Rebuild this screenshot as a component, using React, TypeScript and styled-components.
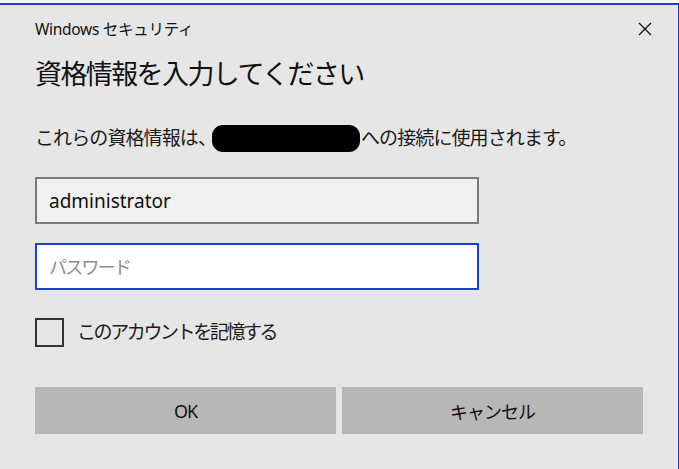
import React, {useState} from 'react';
import styled, {createGlobalStyle} from 'styled-components';

const GlobalStyle = createGlobalStyle`
  html, body {
    margin: 0;
    padding: 0;
    background: #ffffff;
  }
  body {
    font-family: "Noto Sans", "Noto Sans CJK JP", sans-serif;
    color: #1b1b1b;
  }
`;

const Screen = styled.div`
  width: 679px;
  height: 469px;
  overflow: hidden;
  display: flex;
  flex-direction: column;
  background: #f4f4f4;
`;

const BehindStrip = styled.div`
  height: 3px;
  flex: none;
  background: #f7f7f7;
`;

const Dialog = styled.div`
  flex: 1;
  background: #e6e6e6;
  border-top: 2px solid #1f3fc4;
  border-right: 1px solid #1f3fc4;
  padding: 0 0 0 35px;
  display: flex;
  flex-direction: column;
`;

const TitleBar = styled.div`
  display: flex;
  align-items: center;
  justify-content: space-between;
  height: 20px;
  margin-top: 14px;
  padding-right: 26px;
`;

const Caption = styled.div`
  font-size: 15.5px;
  line-height: 20px;
  letter-spacing: -0.3px;
  color: #111;
`;

const CloseButton = styled.button`
  width: 14px;
  height: 14px;
  padding: 0;
  border: none;
  background: transparent;
  display: flex;
  align-items: center;
  justify-content: center;
`;

const Heading = styled.h1`
  margin: 19px 0 0;
  font-weight: 400;
  font-size: 27px;
  line-height: 32px;
  letter-spacing: -1.6px;
  color: #111;
`;

const Message = styled.p`
  margin: 35px 0 0;
  font-size: 19px;
  line-height: 25px;
  letter-spacing: -0.9px;
  display: flex;
  align-items: center;
`;

const Redacted = styled.span`
  display: inline-block;
  width: 148px;
  height: 27px;
  margin: 0 1px 0 -4px;
  border-radius: 11px;
  background: #000;
`;

const Field = styled.input<{$focused?: boolean}>`
  box-sizing: border-box;
  width: 444px;
  height: 47px;
  margin-top: ${p => (p.$focused ? '19px' : '25px')};
  padding: 0 12px;
  border: 2px solid ${p => (p.$focused ? '#1f3fc4' : '#7a7a7a')};
  background: ${p => (p.$focused ? '#ffffff' : '#f0f0f0')};
  font-family: "Noto Sans", "Noto Sans CJK JP", sans-serif;
  font-size: 19px;
  color: #111;
  outline: none;
  &::placeholder {
    color: #8c8c8c;
    font-size: 18px;
    letter-spacing: -1.8px;
  }
`;

const CheckRow = styled.label`
  display: flex;
  align-items: center;
  gap: 13px;
  margin-top: 28px;
  height: 29px;
`;

const CheckBox = styled.span<{$checked: boolean}>`
  box-sizing: border-box;
  width: 29px;
  height: 29px;
  border: 2px solid #333333;
  background: ${p => (p.$checked ? '#1f3fc4' : 'transparent')};
`;

const CheckLabel = styled.span`
  font-size: 19px;
  line-height: 25px;
  letter-spacing: -2.4px;
`;

const Buttons = styled.div`
  display: flex;
  gap: 6px;
  margin-top: 40px;
`;

const Button = styled.button`
  width: 301px;
  height: 47px;
  border: none;
  background: #b7b7b7;
  font-family: "Noto Sans", "Noto Sans CJK JP", sans-serif;
  font-size: 18px;
  letter-spacing: -1px;
  color: #111;
`;

function App() {
  const [remember, setRemember] = useState(false);
  return (
    <Screen>
      <GlobalStyle/>
      <BehindStrip/>
      <Dialog>
        <TitleBar>
          <Caption>Windows セキュリティ</Caption>
          <CloseButton aria-label="閉じる">
            <svg width="14" height="14" viewBox="0 0 14 14">
              <path d="M1 1 L13 13 M13 1 L1 13" stroke="#111" strokeWidth="1.3" fill="none"/>
            </svg>
          </CloseButton>
        </TitleBar>
        <Heading>資格情報を入力してください</Heading>
        <Message>
          これらの資格情報は、<Redacted/>への接続に使用されます。
        </Message>
        <Field defaultValue="administrator"/>
        <Field $focused type="password" placeholder="パスワード"/>
        <CheckRow onClick={() => setRemember(!remember)}>
          <CheckBox $checked={remember}/>
          <CheckLabel>このアカウントを記憶する</CheckLabel>
        </CheckRow>
        <Buttons>
          <Button>OK</Button>
          <Button>キャンセル</Button>
        </Buttons>
      </Dialog>
    </Screen>
  );
}

export default App;
